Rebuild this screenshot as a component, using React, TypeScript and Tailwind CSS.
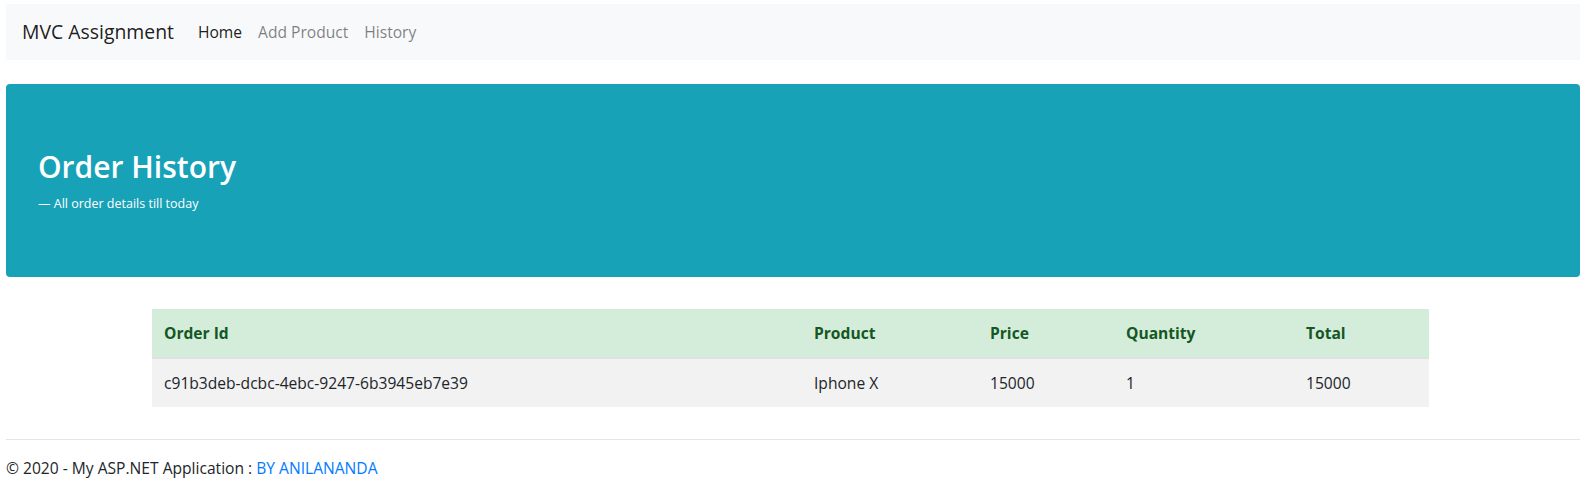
export default function App() {
  const orders = [
    { id: 'c91b3deb-dcbc-4ebc-9247-6b3945eb7e39', product: 'Iphone X', price: 15000, qty: 1, total: 15000 },
  ]

  return (
    <div className="min-h-screen bg-white px-[6px] pt-[4px] text-[15.6px] text-[#212529] [font-family:'Open_Sans',sans-serif]">
      <nav className="flex h-[56px] items-center bg-[#f8f9fa] px-4">
        <a className="mr-4 text-[19.4px] leading-[30px] text-black/90">MVC Assignment</a>
        <ul className="flex">
          <li><a className="block px-2 py-2 leading-6 text-black/90">Home</a></li>
          <li><a className="block px-2 py-2 leading-6 text-black/50">Add Product</a></li>
          <li><a className="block px-2 py-2 leading-6 text-black/50">History</a></li>
        </ul>
      </nav>

      <div className="mt-6 mb-8 rounded bg-[#17a2b8] px-8 py-16 text-white">
        <h1 className="mb-2 text-[30px] font-semibold leading-[38px]">Order History</h1>
        <p className="text-[12.5px] leading-[19px]">— All order details till today</p>
      </div>

      <table className="ml-[146px] w-[1277px] border-collapse text-left">
        <thead className="bg-[#d4edda] text-[#155724]">
          <tr>
            <th className="w-[650px] border-b-2 border-[#dee2e6] p-3 font-bold leading-6">Order Id</th>
            <th className="w-[176px] border-b-2 border-[#dee2e6] p-3 font-bold leading-6">Product</th>
            <th className="w-[136px] border-b-2 border-[#dee2e6] p-3 font-bold leading-6">Price</th>
            <th className="w-[180px] border-b-2 border-[#dee2e6] p-3 font-bold leading-6">Quantity</th>
            <th className="border-b-2 border-[#dee2e6] p-3 font-bold leading-6">Total</th>
          </tr>
        </thead>
        <tbody>
          {orders.map((o) => (
            <tr key={o.id} className="bg-[#f2f2f2]">
              <td className="p-3 leading-6">{o.id}</td>
              <td className="p-3 leading-6">{o.product}</td>
              <td className="p-3 leading-6">{o.price}</td>
              <td className="p-3 leading-6">{o.qty}</td>
              <td className="p-3 leading-6">{o.total}</td>
            </tr>
          ))}
        </tbody>
      </table>

      <hr className="mt-[32px] mb-4 border-t border-black/10" />
      <footer>
        <p className="leading-6">
          © 2020 - My ASP.NET Application : <a className="text-[#007bff]">BY ANILANANDA</a>
        </p>
      </footer>
    </div>
  )
}
